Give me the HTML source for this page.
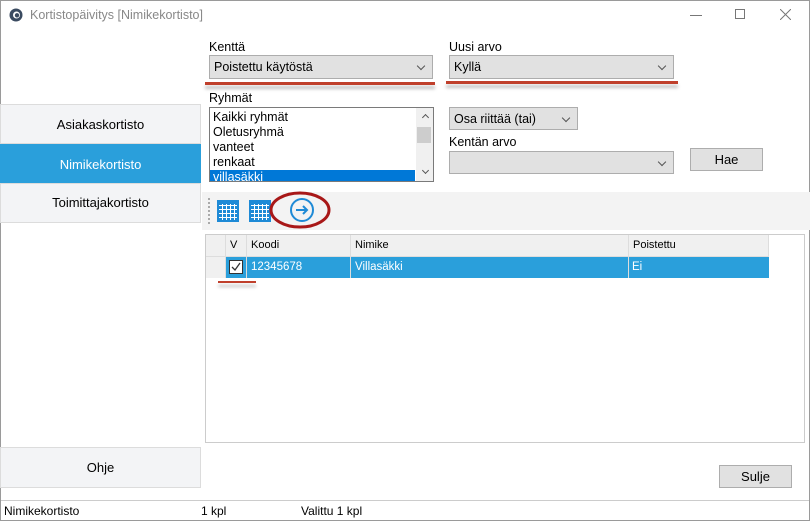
<!DOCTYPE html>
<html><head><style>
*{margin:0;padding:0;box-sizing:border-box}
body{width:810px;height:521px;background:#fff;font-family:"Liberation Sans",sans-serif;font-size:12px;color:#000;position:relative;overflow:hidden}
.a{position:absolute}
.sel{position:absolute;background:#e1e1e1;border:1px solid #adadad;padding:4px 0 0 4px;font-size:12.5px}
.sel:after{content:"";position:absolute;right:8px;top:7px;width:5px;height:5px;border-right:1px solid #555;border-bottom:1px solid #555;transform:rotate(45deg)}
.side{position:absolute;left:0;width:201px;background:#f3f4f6;border:1px solid #dcdcdc;text-align:center;font-size:13px}
.btn{position:absolute;background:#e1e1e1;border:1px solid #adadad;text-align:center;font-size:13px}
.red{position:absolute;height:3px;background:#c0402c;box-shadow:0 4px 3px rgba(0,0,0,0.25)}
.grid{position:absolute;top:0;height:22px;border-right:1px solid #ddd;padding:4px 0 0 4px;font-size:11px}
</style></head><body>
<div class="a" style="left:0;top:0;width:810px;height:521px;border:1px solid #9a9a9a"></div>
<svg class="a" style="left:9px;top:8px" width="14" height="14"><circle cx="7" cy="7" r="6.5" fill="#3a4a60"/><circle cx="7.5" cy="7" r="3.5" fill="#fff"/><circle cx="8" cy="7.3" r="2.2" fill="#3a4a60"/></svg>
<div class="a" style="left:30px;top:8px;font-size:12.5px;color:#888">Kortistopäivitys [Nimikekortisto]</div>
<div class="a" style="left:690px;top:15px;width:12px;height:1px;background:#777"></div>
<div class="a" style="left:735px;top:9px;width:10px;height:10px;border:1px solid #777"></div>
<svg class="a" style="left:780px;top:9px" width="11" height="11"><path d="M0 0L11 11M11 0L0 11" stroke="#777"/></svg>
<div class="side" style="top:104px;height:40px;line-height:40px">Asiakaskortisto</div>
<div class="side" style="top:144px;height:40px;line-height:40px;background:#2a9fdb;border-color:#2a9fdb;color:#fff">Nimikekortisto</div>
<div class="side" style="top:183px;height:40px;line-height:38px">Toimittajakortisto</div>
<div class="side" style="top:447px;height:41px;line-height:40px">Ohje</div>
<div class="a" style="left:209px;top:40px;font-size:12.5px">Kenttä</div>
<div class="sel" style="left:209px;top:55px;width:224px;height:24px">Poistettu käytöstä</div>
<div class="red" style="left:205px;top:82px;width:230px"></div>
<div class="a" style="left:449px;top:40px;font-size:12.5px">Uusi arvo</div>
<div class="sel" style="left:449px;top:55px;width:225px;height:24px">Kyllä</div>
<div class="red" style="left:446px;top:81px;width:232px"></div>
<div class="a" style="left:209px;top:91px;font-size:12.5px">Ryhmät</div>
<div class="a" style="left:209px;top:107px;width:225px;height:75px;border:1px solid #7a7a7a;overflow:hidden;font-size:12.5px;line-height:15px">
 <div style="padding:2px 0 0 3px">Kaikki ryhmät<br>Oletusryhmä<br>vanteet<br>renkaat</div>
 <div style="background:#0078d7;color:#fff;width:205px;padding-left:3px;height:15px">villasäkki</div>
 <div class="a" style="right:0;top:0;width:17px;height:73px;background:#f0f0f0"></div>
 <div class="a" style="right:2px;top:19px;width:14px;height:16px;background:#cdcdcd"></div>
 <div class="a" style="right:5px;top:7px;width:5px;height:5px;border-left:1px solid #555;border-top:1px solid #555;transform:rotate(45deg)"></div>
 <div class="a" style="right:5px;top:60px;width:5px;height:5px;border-right:1px solid #555;border-bottom:1px solid #555;transform:rotate(45deg)"></div>
</div>
<div class="sel" style="left:449px;top:107px;width:129px;height:23px">Osa riittää (tai)</div>
<div class="a" style="left:449px;top:135px;font-size:12.5px">Kentän arvo</div>
<div class="sel" style="left:449px;top:151px;width:225px;height:23px"></div>
<div class="btn" style="left:690px;top:148px;width:73px;height:23px;line-height:21px">Hae</div>
<div class="a" style="left:202px;top:192px;width:608px;height:38px;background:#f3f3f3"></div>
<div class="a" style="left:208px;top:198px;width:2px;height:26px;border-left:2px dotted #aaa"></div>
<svg class="a" style="left:217px;top:200px" width="22" height="22"><rect width="22" height="22" rx="2" fill="#1e8ad6"/><path d="M2 5.5H20M2 9.5H20M2 13.5H20M2 17.5H20M5.5 4V20M9.5 4V20M13.5 4V20M17.5 4V20" stroke="#fff" stroke-width="1"/><rect x="0.5" y="0.5" width="21" height="21" fill="none" stroke="#1e8ad6"/></svg>
<svg class="a" style="left:249px;top:200px" width="22" height="22"><rect width="22" height="22" rx="2" fill="#1e8ad6"/><path d="M2 5.5H20M2 9.5H20M2 13.5H20M2 17.5H20M5.5 4V20M9.5 4V20M13.5 4V20M17.5 4V20" stroke="#fff" stroke-width="1"/><rect x="0.5" y="0.5" width="21" height="21" fill="none" stroke="#1e8ad6"/></svg>
<svg class="a" style="left:268px;top:190px" width="64" height="40"><ellipse cx="32" cy="20" rx="29" ry="17" fill="none" stroke="#a81818" stroke-width="3"/><circle cx="34" cy="20" r="11" fill="none" stroke="#1e8ad6" stroke-width="2"/><path d="M28 20H39M35 16L39 20L35 24" fill="none" stroke="#1e8ad6" stroke-width="2"/></svg>
<div class="a" style="left:205px;top:234px;width:600px;height:209px;border:1px solid #ccc;background:#fff"></div>
<div class="a" style="left:206px;top:235px;width:563px;height:22px;background:#f0f0f0;border-bottom:1px solid #ddd">
 <div class="grid" style="left:0;width:20px"></div>
 <div class="grid" style="left:20px;width:21px">V</div>
 <div class="grid" style="left:41px;width:104px">Koodi</div>
 <div class="grid" style="left:145px;width:278px">Nimike</div>
 <div class="grid" style="left:423px;width:140px">Poistettu</div>
</div>
<div class="a" style="left:206px;top:257px;width:20px;height:21px;background:#f0f0f0;border-right:1px solid #ddd"></div>
<div class="a" style="left:226px;top:257px;width:543px;height:21px;background:#2a9fdb;color:#fff;font-size:11.5px">
 <div class="a" style="left:3px;top:3px;width:14px;height:14px;background:#fff;border:1px solid #333"></div>
 <svg class="a" style="left:5px;top:5px" width="10" height="10"><path d="M1 5L4 8L9 1" fill="none" stroke="#333" stroke-width="1.3"/></svg>
 <div class="a" style="left:20px;top:0;width:1px;height:21px;background:#ddd"></div>
 <div class="a" style="left:25px;top:4px">12345678</div>
 <div class="a" style="left:124px;top:0;width:1px;height:21px;background:#ddd"></div>
 <div class="a" style="left:129px;top:4px">Villasäkki</div>
 <div class="a" style="left:402px;top:0;width:1px;height:21px;background:#ddd"></div>
 <div class="a" style="left:406px;top:4px">Ei</div>
</div>
<div class="red" style="left:218px;top:281px;width:38px;height:2px"></div>
<div class="btn" style="left:719px;top:465px;width:73px;height:23px;line-height:22px">Sulje</div>
<div class="a" style="left:1px;top:500px;width:808px;height:20px;border-top:1px solid #ccc;font-size:12px">
 <div class="a" style="left:3px;top:3px">Nimikekortisto</div>
 <div class="a" style="left:200px;top:3px">1 kpl</div>
 <div class="a" style="left:300px;top:3px">Valittu 1 kpl</div>
</div>
</body></html>
